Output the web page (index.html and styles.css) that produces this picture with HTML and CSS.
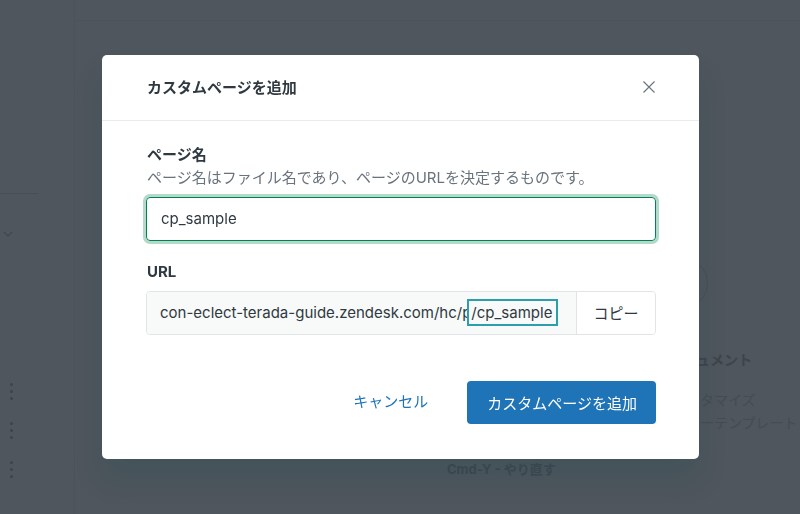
FILE: index.html
```html
<!DOCTYPE html>
<html lang="ja">
<head>
  <meta charset="UTF-8">
  <title>カスタムページを追加</title>
  <link rel="stylesheet" href="styles.css">
</head>
<body>
  <div class="page">
    <aside class="sidebar">
      <div class="sidebar-rule"></div>
      <svg class="chevron" width="10" height="6" viewBox="0 0 10 6"><path d="M1 1l4 4 4-4" fill="none" stroke="currentColor" stroke-width="1.2"/></svg>
      <div class="kebabs">
        <span class="kebab"><i></i><i></i><i></i></span>
        <span class="kebab"><i></i><i></i><i></i></span>
        <span class="kebab"><i></i><i></i><i></i></span>
      </div>
    </aside>
    <main class="workspace">
      <section class="canvas">
        <div class="shortcut">Cmd-Y - やり直す</div>
      </section>
      <section class="panel">
        <div class="panel-avatar"></div>
        <div class="panel-title">ドキュメント</div>
        <ul class="panel-list">
          <li>カスタマイズ</li>
          <li>カバーテンプレート</li>
        </ul>
      </section>
    </main>
  </div>

  <div class="backdrop">
    <div class="modal">
      <div class="modal-header">
        <h1 class="modal-title">カスタムページを追加</h1>
        <button class="modal-close" aria-label="閉じる">
          <svg width="12" height="12" viewBox="0 0 12 12"><path d="M0.5 0.5l11 11M11.5 0.5l-11 11" stroke="currentColor" stroke-width="1.1" fill="none"/></svg>
        </button>
      </div>
      <div class="modal-body">
        <div class="field">
          <label class="field-label">ページ名</label>
          <div class="field-hint">ページ名はファイル名であり、ページのURLを決定するものです。</div>
          <div class="text-input">cp_sample</div>
        </div>
        <div class="field">
          <label class="field-label">URL</label>
          <div class="url-group">
            <div class="url-value">con-eclect-terada-guide.zendesk.com/hc/p<span class="url-slug">/cp_sample</span></div>
            <button class="url-copy">コピー</button>
          </div>
        </div>
      </div>
      <div class="modal-footer">
        <button class="btn-link">キャンセル</button>
        <button class="btn-primary">カスタムページを追加</button>
      </div>
    </div>
  </div>
</body>
</html>
```

FILE: styles.css
```css
* {
  box-sizing: border-box;
}

body {
  margin: 0;
  width: 800px;
  height: 514px;
  overflow: hidden;
  background-color: #4f565d;
  font-family: Inter, "Noto Sans CJK JP", sans-serif;
  color: #2f3941;
}

.page {
  display: flex;
  height: 514px;
}

.sidebar {
  width: 75px;
  flex-shrink: 0;
  border-right: 1px solid #4b5259;
  display: flex;
  flex-direction: column;
  color: #40474e;
}

.sidebar-rule {
  margin-top: 193px;
  width: 38px;
  height: 1px;
  background-color: #474e55;
}

.chevron {
  margin: 37px 0 0 3px;
}

.kebabs {
  margin: 146px 0 0 10px;
  display: flex;
  flex-direction: column;
  gap: 22px;
}

.kebab {
  display: flex;
  flex-direction: column;
  gap: 4px;
}

.kebab i {
  display: block;
  width: 3px;
  height: 3px;
  border-radius: 50%;
  background-color: #3d444b;
}

.workspace {
  flex: 1;
  margin-top: 20px;
  border-top: 1px solid #4c535a;
  display: flex;
}

.canvas {
  flex: 1;
  padding: 438px 0 0 372px;
}

.shortcut {
  font-size: 13px;
  font-weight: 700;
  line-height: 20px;
  color: #40474e;
  white-space: nowrap;
}

.panel {
  width: 130px;
  padding-top: 237px;
  padding-left: 2px;
  color: #40474e;
  font-size: 14px;
}

.panel-avatar {
  width: 50px;
  height: 50px;
  margin-left: -14px;
  border: 1px solid #484f56;
  border-radius: 50%;
}

.panel-title {
  margin-top: 42px;
  font-weight: 700;
  line-height: 20px;
  color: #3d444b;
  margin-left: -4px;
  white-space: nowrap;
}

.panel-list {
  list-style: none;
  margin: 18px 0 0;
  padding: 0;
  white-space: nowrap;
}

.panel-list li {
  line-height: 23px;
  color: #454c53;
}

.backdrop {
  position: fixed;
  inset: 0;
  display: flex;
  align-items: center;
  justify-content: center;
}

.modal {
  width: 597px;
  height: 404px;
  margin-left: 1px;
  margin-top: -1px;
  background-color: #fff;
  border-radius: 5px;
  box-shadow: 0 20px 28px rgba(4, 68, 77, 0.15);
  display: flex;
  flex-direction: column;
}

.modal-header {
  height: 66px;
  padding: 0 44px 0 45px;
  border-bottom: 1px solid #e9ebed;
  display: flex;
  align-items: center;
  justify-content: space-between;
}

.modal-title {
  margin: 0;
  font-size: 15px;
  font-weight: 700;
  line-height: 20px;
  padding-top: 1px;
}

.modal-close {
  border: 0;
  background: none;
  padding: 0;
  width: 12px;
  height: 12px;
  color: #68737d;
  display: flex;
}

.modal-body {
  padding: 24px 43px 0 44px;
  display: flex;
  flex-direction: column;
  gap: 21px;
}

.field {
  display: flex;
  flex-direction: column;
}

.field-label {
  font-size: 15px;
  font-weight: 700;
  line-height: 20px;
  padding-left: 1px;
}

.field-hint {
  margin-top: 3px;
  font-size: 15px;
  line-height: 20px;
  color: #68737d;
  padding-left: 1px;
}

.text-input {
  margin-top: 9px;
  height: 44px;
  padding: 0 14px;
  border: 1px solid #038153;
  border-radius: 4px;
  box-shadow: 0 0 0 3px rgba(3, 129, 83, 0.3);
  font-size: 15px;
  line-height: 42px;
}

.url-group {
  margin-top: 9px;
  height: 44px;
  display: flex;
  border: 1px solid #e2e5e7;
  border-radius: 4px;
  overflow: hidden;
}

.url-value {
  flex: 1;
  padding: 0 14px 0 13px;
  background-color: #f8f9f9;
  font-size: 15px;
  line-height: 42px;
  white-space: nowrap;
}

.url-slug {
  position: relative;
  margin-left: -4px;
  padding: 2px 4px 2px 2px;
  background-color: #f8f9f9;
  border: 2px solid #2c9fac;
}

.url-copy {
  width: 79px;
  border: 0;
  border-left: 1px solid #e2e5e7;
  background-color: #fff;
  font-family: inherit;
  font-size: 15px;
  color: #2f3941;
  padding: 0;
}

.modal-footer {
  margin-top: auto;
  padding: 0 43px 35px 44px;
  display: flex;
  justify-content: flex-end;
  align-items: center;
  gap: 39px;
}

.btn-link {
  border: 0;
  background: none;
  padding: 0;
  font-family: inherit;
  font-size: 15px;
  line-height: 20px;
  color: #1f73b7;
}

.btn-primary {
  height: 43px;
  padding: 0 19px 0 20px;
  border: 0;
  border-radius: 4px;
  background-color: #1f73b7;
  color: #fff;
  font-family: inherit;
  font-size: 15px;
}
```
